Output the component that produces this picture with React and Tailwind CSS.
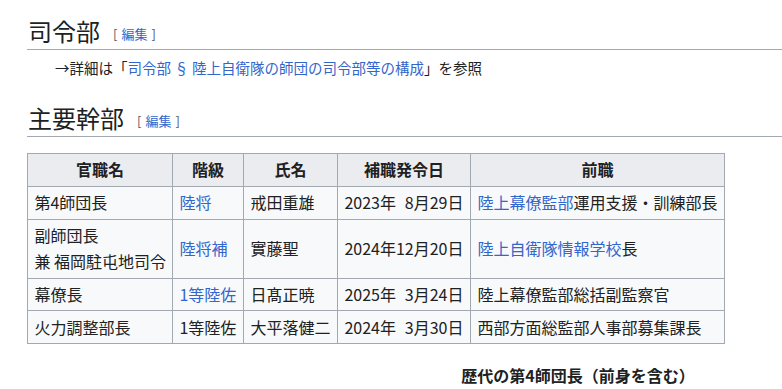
import React from "react";

const L = ({ children }) => <span className="text-[#3366cc]">{children}</span>;

const Edit = () => (
  <span className="ml-[13px] text-[13px] leading-none text-[#54595d] align-[2px]">
    <span className="mr-[4px]">[</span>
    <span className="text-[#3366cc]">編集</span>
    <span className="ml-[4px]">]</span>
  </span>
);

const Pad = () => <span className="invisible">0</span>;

const rows = [
  {
    a: "第4師団長",
    b: <L>陸将</L>,
    c: "戒田重雄",
    d: (
      <>
        2023年<Pad />8月29日
      </>
    ),
    e: (
      <>
        <L>陸上幕僚監部</L>運用支援・訓練部長
      </>
    ),
  },
  {
    a: (
      <>
        副師団長
        <br />兼 福岡駐屯地司令
      </>
    ),
    b: <L>陸将補</L>,
    c: "實藤聖",
    d: "2024年12月20日",
    e: (
      <>
        <L>陸上自衛隊情報学校</L>長
      </>
    ),
  },
  {
    a: "幕僚長",
    b: <L>1等陸佐</L>,
    c: "日髙正暁",
    d: (
      <>
        2025年<Pad />3月24日
      </>
    ),
    e: "陸上幕僚監部総括副監察官",
  },
  {
    a: "火力調整部長",
    b: "1等陸佐",
    c: "大平落健二",
    d: (
      <>
        2024年<Pad />3月30日
      </>
    ),
    e: "西部方面総監部人事部募集課長",
  },
];

export default function App() {
  const th =
    "border border-[#a2a9b1] bg-[#eaecf0] px-[6.4px] py-[3.2px] leading-[25.6px] font-bold text-center";
  const td =
    "border border-[#a2a9b1] bg-[#f8f9fa] px-[6.4px] py-[3.2px] leading-[25.6px] text-left align-middle whitespace-nowrap";
  return (
    <div
      className="w-[782px] h-[389px] overflow-hidden bg-white text-[#202122]"
      style={{ fontFamily: '"Noto Sans CJK JP", "Noto Sans", sans-serif' }}
    >
      <div className="pl-[27px]">
        <h2 className="mt-[14px] pb-[2px] text-[24px] leading-[33px] font-normal border-b border-[#a2a9b1] pl-[1px]">
          司令部
          <Edit />
        </h2>
        <div className="mt-[7px] pl-[28px] text-[14.5px] leading-[22px]">
          →詳細は「<L>司令部 § 陸上自衛隊の師団の司令部等の構成</L>」を参照
        </div>
        <h2 className="mt-[22px] pb-[2px] text-[24px] leading-[33px] font-normal border-b border-[#a2a9b1] pl-[1px]">
          主要幹部
          <Edit />
        </h2>
        <table className="mt-[16px] border-collapse table-fixed w-[697px] text-[16px]">
          <colgroup>
            <col className="w-[145px]" />
            <col className="w-[71px]" />
            <col className="w-[94px]" />
            <col className="w-[133px]" />
            <col className="w-[254px]" />
          </colgroup>
          <thead>
            <tr>
              <th className={th}>官職名</th>
              <th className={th}>階級</th>
              <th className={th}>氏名</th>
              <th className={th}>補職発令日</th>
              <th className={th}>前職</th>
            </tr>
          </thead>
          <tbody>
            {rows.map((r, i) => (
              <tr key={i}>
                <td className={td}>{r.a}</td>
                <td className={td}>{r.b}</td>
                <td className={td}>{r.c}</td>
                <td className={td}>{r.d}</td>
                <td className={td}>{r.e}</td>
              </tr>
            ))}
          </tbody>
        </table>
        <div className="mt-[19px] ml-[344px] w-[414px] text-center text-[16px] leading-[25.6px] font-bold">
          歴代の第4師団長（前身を含む）
        </div>
      </div>
    </div>
  );
}
